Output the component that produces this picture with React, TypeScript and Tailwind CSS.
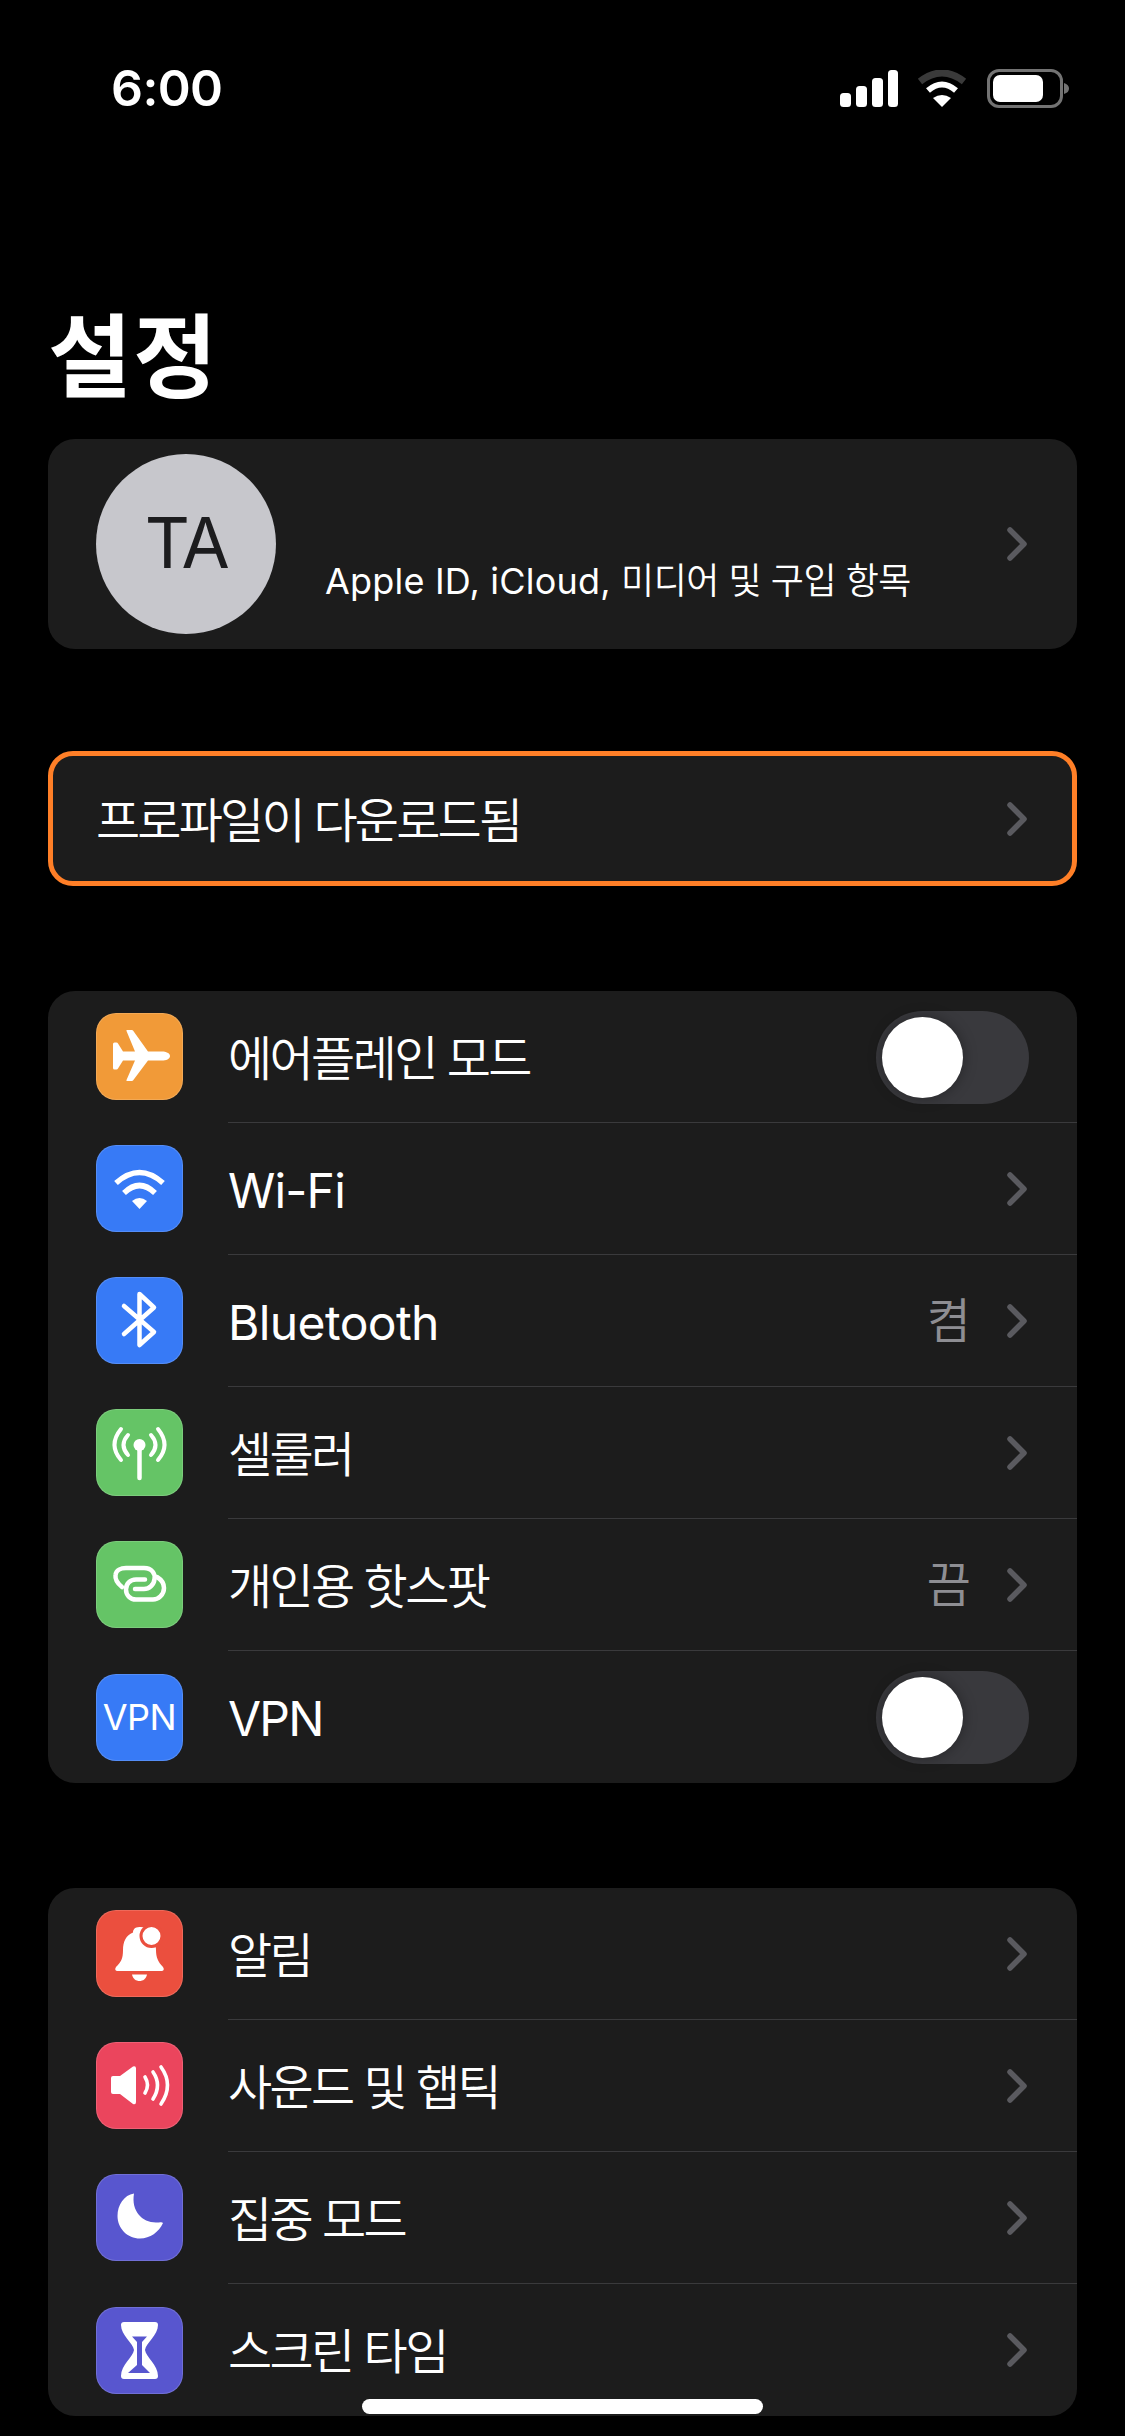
import React from "react";

const font = "font-['Inter','Noto_Sans_CJK_KR',sans-serif]";

function Chevron() {
  return (
    <svg width="20" height="34" viewBox="0 0 20 34" className="shrink-0" fill="none">
      <path d="M3 3 L17 17 L3 31" stroke="#5a5a5f" strokeWidth="5.5" strokeLinecap="round" strokeLinejoin="round" />
    </svg>
  );
}

function Toggle() {
  return (
    <div className="flex h-[93px] w-[153px] items-center rounded-full bg-[#39393d] pl-[6px]">
      <div className="h-[81px] w-[81px] rounded-full bg-white shadow-[0_0_14px_rgba(0,0,0,0.35)]" />
    </div>
  );
}

function IconBox({ color, children }: { color: string; children: React.ReactNode }) {
  return (
    <div
      className="flex h-[87px] w-[87px] shrink-0 items-center justify-center rounded-[20px] border border-white/15"
      style={{ backgroundColor: color }}
    >
      {children}
    </div>
  );
}

function Svg({ children }: { children: React.ReactNode }) {
  return (
    <svg width="87" height="87" viewBox="0 0 87 87" className="shrink-0" fill="none">
      {children}
    </svg>
  );
}

const Plane = () => (
  <Svg>
    <path
      fill="#fff"
      d="M74 43 C74 40 70 38.4 66 38.4 L52 38.4 L37 17.4 Q36.5 17 36 17 L31 17 Q30 17 30.5 18 L39 38.4 L27 38.4 L22 30.5 Q21.5 29.5 20.5 29.5 L18.5 29.5 Q17 29.5 17 31 L17 55 Q17 56.5 18.5 56.5 L20.5 56.5 Q21.5 56.5 22 55.5 L27 47.6 L39 47.6 L30.5 67 Q30 68 31 68 L36 68 Q36.5 68 37 67.6 L52 47.6 L66 47.6 C70 47.6 74 46 74 43Z"
    />
  </Svg>
);
const WifiIcon = () => (
  <Svg>
    <path d="M20 38 Q43.5 17 67 38" stroke="#fff" strokeWidth="5.5" />
    <path d="M28 48 Q43.5 33 59 48" stroke="#fff" strokeWidth="5.5" />
    <path d="M43.5 64 L36 56 Q43.5 50 51 56Z" fill="#fff" />
  </Svg>
);
const Bluetooth = () => (
  <Svg>
    <path
      d="M28 29 L58 55 L43.5 68 V17 L58 30.5 L28 57"
      stroke="#fff"
      strokeWidth="4.5"
      strokeLinecap="round"
      strokeLinejoin="round"
    />
  </Svg>
);
const Cellular = () => (
  <Svg>
    <circle cx="43.5" cy="36" r="6" fill="#fff" />
    <path d="M43.5 38 V69" stroke="#fff" strokeWidth="4.5" strokeLinecap="round" />
    <g stroke="#fff" strokeWidth="4" strokeLinecap="round">
      <path d="M32 26 Q23 36 32 46" />
      <path d="M25 20 Q12 36 25 51" />
      <path d="M55 26 Q64 36 55 46" />
      <path d="M62 20 Q75 36 62 51" />
    </g>
  </Svg>
);
const Hotspot = () => (
  <Svg>
    <g stroke="#fff" strokeWidth="4.5" strokeLinecap="round">
      <path d="M26 46 C21 42 19 38 19.5 34 C20 29 25 27 30 27 L48 27 C56 27 59.5 33 58.5 38 C58 44 53 48 48 48 L39 48" />
      <path d="M61 36 C66 39 68 43 68 47 C68 54 62 58.5 57 58.5 L40 58.5 C34 58.5 30 54 30 48.5 C30 43 34 38.5 40 38.5 L49 38.5" />
    </g>
  </Svg>
);
const Bell = () => (
  <Svg>
    <path
      fill="#fff"
      d="M43.5 17 C38.5 17 37 20 37 22.5 C30 25 27 32 27 40 C27 49 25 52 20 57 Q18 60 21 61 L66 61 Q69 60 67 57 C62 52 60 47 60 40 C60 28 55 20 50 18 C48 17 45 17 43.5 17 Z"
    />
    <path fill="#fff" d="M36 64.5 H51 C50 69 47 71 43.5 71 C40 71 37 69 36 64.5Z" />
    <circle cx="55.5" cy="26" r="10.5" fill="#fff" stroke="#eb4f3e" strokeWidth="3" />
  </Svg>
);
const Sound = () => (
  <Svg>
    <path fill="#fff" d="M17 34 H24 L37 24.5 Q40 23.5 40 26.5 V60 Q40 63 37 62 L24 52 H17 Q15 52 15 50 V36 Q15 34 17 34Z" />
    <g stroke="#fff" strokeWidth="3.6" strokeLinecap="round">
      <path d="M49 35 Q54 43 49 51" />
      <path d="M57 30 Q66 43 57 57" />
      <path d="M65 25 Q78 43 65 62" />
    </g>
  </Svg>
);
const Moon = () => (
  <Svg>
    <path
      fill="#fff"
      d="M38 19.5 C28 21 21.5 31 21.5 42 C21.5 54.5 31.5 64.5 44 64.5 C54 64.5 63 58 67 49 C66 47.5 64 48.5 60 48.5 C46 48.5 35 37 38 19.5Z"
    />
  </Svg>
);
const Hourglass = () => (
  <Svg>
    <path
      fill="#fff"
      d="M28 15 H59 Q62 15 62 18 C62 28 50 36 49 43 C50 50 62 58 62 69 Q62 72 59 72 H28 Q25 72 25 69 C25 58 37 50 38 43 C37 36 25 28 25 18 Q25 15 28 15Z"
    />
    <path fill="#5856cf" d="M36 29.5 H51 L46 35 V58 L54 66 H32 L41 58 V35 Z" />
  </Svg>
);

type Row = {
  label: string;
  color: string;
  icon: React.ReactNode;
  value?: string;
  toggle?: boolean;
  tracking: string;
};

const KO = "font-[350] tracking-[-2.6px]";

const connectivity: Row[] = [
  { label: "에어플레인 모드", color: "#f19a38", icon: <Plane />, toggle: true, tracking: KO },
  { label: "Wi-Fi", color: "#377af6", icon: <WifiIcon />, tracking: "font-normal tracking-[-0.8px]" },
  { label: "Bluetooth", color: "#377af6", icon: <Bluetooth />, value: "켬", tracking: "font-normal tracking-[-0.6px]" },
  { label: "셀룰러", color: "#65c466", icon: <Cellular />, tracking: KO },
  { label: "개인용 핫스팟", color: "#65c466", icon: <Hotspot />, value: "끔", tracking: KO },
  {
    label: "VPN",
    color: "#377af6",
    icon: <span className="text-[36px] leading-none tracking-[-0.5px] text-white">VPN</span>,
    toggle: true,
    tracking: "font-normal tracking-[-1.8px]",
  },
];

const general: Row[] = [
  { label: "알림", color: "#eb4f3e", icon: <Bell />, tracking: KO },
  { label: "사운드 및 햅틱", color: "#eb455d", icon: <Sound />, tracking: KO },
  { label: "집중 모드", color: "#5856cf", icon: <Moon />, tracking: KO },
  { label: "스크린 타임", color: "#5856cf", icon: <Hourglass />, tracking: KO },
];

function SettingsRow({ row, last }: { row: Row; last: boolean }) {
  return (
    <div className="flex h-[132px] items-stretch pl-[48px]">
      <div className={`flex items-center ${last ? "" : "pb-px"}`}>
        <IconBox color={row.color}>{row.icon}</IconBox>
      </div>
      <div
        className={`ml-[45px] flex min-w-0 flex-1 items-center justify-between pr-[50px] ${
          last ? "" : "border-b border-[#3a3a3c]"
        }`}
      >
        <span className={`pt-[4px] text-[48px] leading-none text-white ${row.tracking}`}>
          {row.label}
        </span>
        {row.toggle ? (
          <div className={`-mr-[2px] ${last ? "" : "pt-[2px]"}`}>
            <Toggle />
          </div>
        ) : (
          <div className="flex items-center gap-[36px]">
            {row.value && (
              <span className="text-[48px] font-[350] leading-none text-[#8e8e93]">{row.value}</span>
            )}
            <Chevron />
          </div>
        )}
      </div>
    </div>
  );
}

function Group({ rows }: { rows: Row[] }) {
  return (
    <div className="mx-[48px] overflow-hidden rounded-[27px] bg-[#1c1c1c]">
      {rows.map((r, i) => (
        <SettingsRow key={r.label} row={r} last={i === rows.length - 1} />
      ))}
    </div>
  );
}

function StatusIcons() {
  return (
    <div className="flex items-center">
      <svg width="58" height="37" viewBox="0 0 58 37" fill="#fff">
        <rect x="0" y="23" width="11" height="14" rx="3.5" />
        <rect x="16" y="16" width="11" height="21" rx="3.5" />
        <rect x="32" y="8" width="11" height="29" rx="3.5" />
        <rect x="48" y="0" width="10" height="37" rx="3.5" />
      </svg>
      <svg width="50" height="37" viewBox="0 0 50 37" fill="none" className="ml-[19px]">
        <path d="M3 11.5 Q25 -5.5 47 11.5" stroke="#3a3a3a" strokeWidth="7" />
        <path d="M11 20.5 Q25 8.5 39 20.5" stroke="#fff" strokeWidth="6" />
        <path d="M25 37 L16 28 Q25 22 34 28Z" fill="#fff" />
      </svg>
      <svg width="82" height="39" viewBox="0 0 82 39" fill="none" className="ml-[20px]">
        <rect x="1.5" y="1.5" width="73" height="36" rx="10.5" stroke="#737373" strokeWidth="3" />
        <rect x="6" y="6" width="50" height="27" rx="7" fill="#fff" />
        <path d="M77 14 Q82 15.5 82 19.5 Q82 23.5 77 25Z" fill="#737373" />
      </svg>
    </div>
  );
}

export default function App() {
  return (
    <div className={`relative h-[2436px] w-[1125px] overflow-hidden bg-black ${font}`}>
      <div className="flex h-[439px] flex-col">
        <div className="flex items-center justify-between pl-[111px] pr-[56px] pt-[69px]">
          <span className="text-[50px] font-semibold leading-[39px] tracking-[-0.6px] text-white">6:00</span>
          <StatusIcons />
        </div>
        <h1 className="mt-[204px] pl-[48px] text-[91px] font-bold leading-none tracking-[1.5px] text-white">설정</h1>
      </div>

      <div className="mx-[48px] flex h-[210px] items-center rounded-[27px] bg-[#1c1c1c] pl-[48px] pr-[50px]">
        <div className="flex h-[180px] w-[180px] shrink-0 items-center justify-center rounded-full bg-[#c7c7cc]">
          <span className="pb-[3px] text-[70px] font-normal leading-none tracking-[-2.5px] text-[#1c1c1e]">TA</span>
        </div>
        <div className="ml-[49px] mt-[74px] flex-1 text-[36px] leading-none text-white">
          <span className="font-normal tracking-[0.2px]">Apple ID, iCloud, </span>
          <span className="font-[350] tracking-[-0.5px]">미디어 및 구입 항목</span>
        </div>
        <Chevron />
      </div>

      <div className="mx-[48px] mt-[102px] flex h-[135px] items-center justify-between rounded-[25px] border-[5px] border-[#ff7f27] bg-[#1c1c1c] pl-[43px] pr-[45px]">
        <span className="pt-[4px] text-[48px] font-[350] leading-none tracking-[-2.8px] text-white">
          프로파일이 다운로드됨
        </span>
        <Chevron />
      </div>

      <div className="mt-[105px]">
        <Group rows={connectivity} />
      </div>
      <div className="mt-[105px]">
        <Group rows={general} />
      </div>

      <div className="absolute bottom-[22px] left-[362px] h-[15px] w-[401px] rounded-full bg-white" />
    </div>
  );
}
